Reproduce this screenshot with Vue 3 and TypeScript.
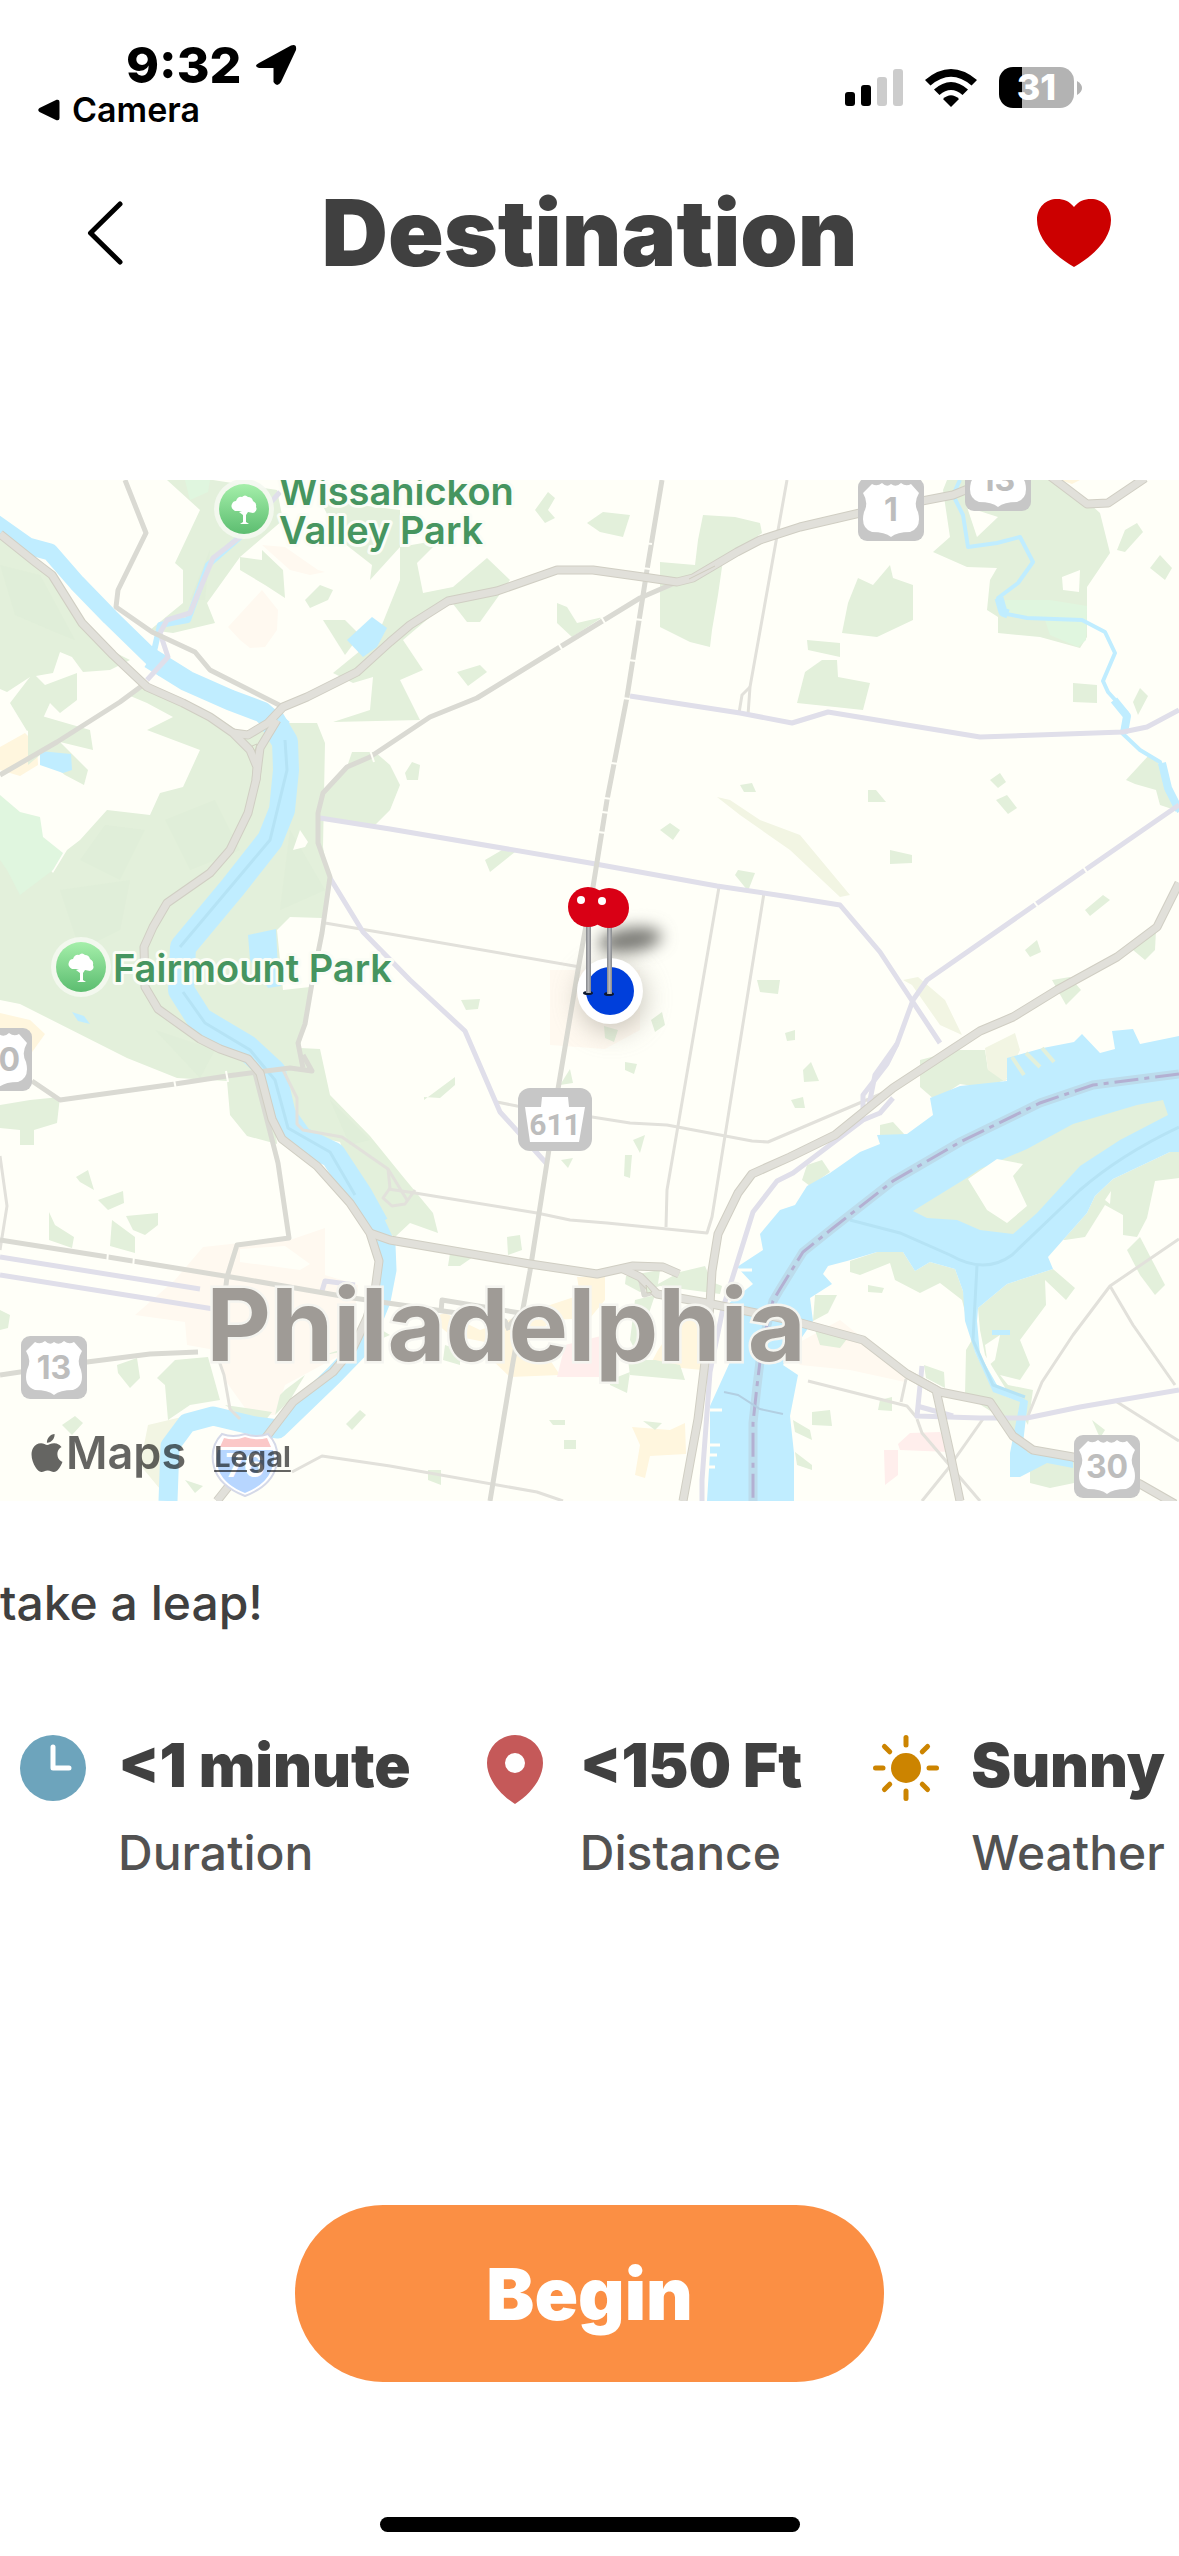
<script setup lang="ts">
import { ref } from 'vue'

interface Stat { icon: 'clock' | 'pin' | 'sun'; value: string; label: string }
interface Shield { x: number; y: number; label: string }

const favourite = ref(true)

const stats: Stat[] = [
  { icon: 'clock', value: '<1 minute', label: 'Duration' },
  { icon: 'pin', value: '<150 Ft', label: 'Distance' },
  { icon: 'sun', value: 'Sunny', label: 'Weather' },
]

const parks: string[] = [
  '0,58 50,92 85,143 110,170 130,180 110,190 83,192 72,177 60,172 53,193 30,197 7,212 0,209',
  '143,203 217,237 247,257 277,243 317,243 325,263 323,367 330,407 322,438 290,437 277,450 283,510 310,507 300,568 320,569 330,615 370,656 400,693 433,733 438,753 410,743 395,757 388,753 373,730 353,696 340,662 303,654 270,600 277,664 247,656 230,635 227,601 177,598 127,578 20,524 0,520 0,453 0,330 53,393 67,370 80,360 107,330 150,335 160,313 183,307 200,270 147,250 173,237 147,223 128,215',
  '10,223 33,193 45,205 77,193 77,220 60,233 50,223 40,245 27,251',
  '28,232 90,250 93,270 60,262 88,290 84,305 65,295 40,275 28,285',
  '167,0 213,0 277,10 283,40 240,77 207,123 215,143 173,153 150,150 183,123 183,90 175,83 200,30',
  '240,77 262,80 262,70 283,90 285,118 265,105 240,90',
  '320,20 400,30 400,83 400,100 377,157 333,193 353,203 373,197 370,230 333,242 420,240 400,200 423,190 403,160 450,120 467,142 480,142 510,100 487,78 453,107 423,113 417,83 440,60 400,67 370,100 372,85 340,60',
  '323,140 345,140 360,155 345,175',
  '323,313 347,287 352,272 375,272 390,285 400,305 390,330 375,345 320,338',
  '305,120 320,105 333,110 328,120 310,128',
  '587,43 603,32 630,35 623,57 600,52',
  '703,35 735,37 760,43 762,53 723,80 718,115 712,150 710,167 690,162 660,147 660,82 695,85 698,60',
  '557,123 567,127 577,143 603,137 572,157 557,143',
  '535,30 548,12 555,18 548,30 555,38 545,43',
  '457,192 480,185 487,192 468,206',
  '858,98 873,105 890,85 893,98 913,105 913,140 877,157 842,153 848,123',
  '805,192 822,180 837,180 838,197 870,203 863,230 835,227 797,223',
  '807,160 840,163 840,177 808,170',
  '943,10 947,0 1060,0 1090,24 1100,33 1110,73 1087,107 1087,157 1080,168 1040,157 998,153 998,137 987,130 990,100 997,88 967,87 933,72 950,57',
  '1117,70 1125,50 1137,43 1143,52 1125,72',
  '1150,88 1160,75 1172,88 1165,100',
  '1073,203 1097,205 1097,223 1073,222',
  '1126,300 1150,274 1160,285 1175,330 1160,325 1156,310 1135,304',
  '1133,222 1140,208 1148,216 1138,235',
  '1085,430 1103,415 1110,420 1090,436',
  '1133,470 1156,450 1155,470 1145,480',
  '485,380 502,370 515,372 490,392',
  '405,293 412,282 420,285 418,300 407,300',
  '660,350 670,343 680,350 673,360',
  '740,305 752,303 756,312 744,312',
  '890,370 912,375 912,383 890,384',
  '868,310 876,310 886,322 868,322',
  '990,300 1000,293 1006,302 998,308',
  '996,320 1007,315 1017,328 1008,334',
  '1025,470 1037,460 1041,472 1030,477',
  '0,625 30,620 60,617 57,643 34,650 34,665 20,665 20,650 0,648',
  '49,732 55,745 74,757 72,768 49,760',
  '76,697 88,690 94,710 80,702', '98,720 123,711 124,723 108,730', '112,740 135,757 135,773 110,766',
  '126,736 158,733 158,745 145,755 133,750', '0,830 10,835 8,848 0,850',
  '117,885 137,878 140,898 130,908 118,893', '157,898 175,880 208,877 220,920 190,925 168,940 165,905',
  '340,870 365,840 390,855 360,868 320,876', '285,910 305,895 290,920 275,935 280,915',
  '225,925 272,932 265,941 240,935', '346,944 360,930 366,935 352,950',
  '507,757 520,755 522,770 508,775', '450,773 473,777 460,786 448,786', '424,620 455,597 455,605 440,618 424,617',
  '461,520 480,519 478,529 466,530', '604,546 618,550 614,562 605,558', '625,582 637,584 634,594 625,590',
  '651,540 662,532 665,545 655,552', '633,660 645,655 640,673', '625,675 632,675 630,698 624,696',
  '757,500 780,500 778,514 760,512', '570,589 573,603 560,605', '561,680 573,678 568,688',
  '626,796 660,790 658,804 680,792 705,786 712,802 722,806 720,814 660,806 640,812 625,804',
  '635,820 655,815 650,830 640,880 630,860', '628,880 655,880 680,885 685,900 630,895', '610,900 630,892 627,913 610,905',
  '445,865 460,870 460,885 443,880', '549,940 565,940 565,945 553,945', '564,960 576,960 576,969 564,969',
  '643,941 662,943 655,950', '428,990 441,990 441,1005 428,1000',
  '920,580 958,570 985,570 988,590 1000,590 1007,600 980,607 960,604 935,620 920,607',
  '807,685 822,680 830,692 810,706 802,700', '880,645 893,642 905,655 893,665 880,658',
  '803,590 811,582 819,601 804,602', '791,620 803,617 805,628 795,628', '785,553 795,550 795,560 787,561',
  '1063,760 1087,733 1095,716 1113,699 1170,672 1179,672 1179,698 1155,701 1147,738 1137,757 1123,755 1123,735 1105,725 1085,757 1065,760',
  '1127,770 1140,757 1165,805 1155,815 1140,795', '850,781 877,772 903,772 915,791 930,782 955,789 963,811 975,872 995,912 1020,922 1015,955 1000,937 965,915 966,870 972,860 962,820 940,803 920,813 895,800 890,783 860,795 850,792',
  '815,815 837,815 828,833 813,841', '868,805 884,808 882,813 868,812',
  '978,828 1007,804 1053,789 1075,808 1066,820 1045,800 1046,825 1020,860 1030,885 1020,900 1000,895 1008,905 1033,910 1028,945 985,875 980,850',
  '815,850 850,855 840,868 820,865', '924,885 944,892 945,908 926,898', '880,920 892,917 892,931 878,930',
  '812,932 830,930 832,946 812,945', '793,940 810,950 812,960 795,952', '795,972 812,985 812,990 797,985',
  '1010,973 1030,970 1075,980 1074,1003 1050,1008 1030,1003 1030,990', '1092,940 1105,950 1100,958',
  '1052,500 1070,497 1081,510 1066,525', '735,395 738,390 755,393 748,411', '185,1000 203,1006 195,1013',
  '62,945 75,936 83,943 72,955',
]

const highways: string[] = [
  '0,54 35,82 52,95 82,143 113,175 147,207 183,223 210,237 233,253 250,270 257,287 256,300 248,333 230,370 210,393 167,423 153,447 144,467 145,507 158,529 200,559 220,569 248,579 260,593 272,639 282,659 317,686 350,723 370,753 379,781 375,811 367,838 353,868 333,892 293,922 267,956 247,983 217,1021',
  '233,253 248,255 268,243 283,227 307,217 357,192 390,162 410,145 448,121 497,111 557,90 593,90 643,97 677,102 693,98 737,72 760,60 800,47 860,33 953,15 1000,-4',
  '256,300 260,268 277,240',
  '1050,-4 1087,24 1108,23 1145,-2',
  '1179,403 1157,447 1117,477 1057,510 1013,537 980,551 893,608 835,655 790,677 752,694 738,713 718,754 712,791 710,824 705,882 698,939 683,1021',
  '370,753 390,760 530,784 597,794 633,786 663,787 679,794',
  '623,789 640,797 657,814 707,823 790,840 863,860 907,894 940,912 990,922 1013,956 1033,970 1073,977 1140,1004 1175,1024',
  '907,894 936,910 950,973 960,1021',
]

const roads: string[] = [
  '662,0 647,90 627,217 607,320 593,407 578,490 557,615 548,676 530,791 513,882 490,1021',
  '125,0 146,53 118,110 116,127 152,152 195,172 210,190 283,227',
  '0,295 57,262 120,222 143,205',
  '677,102 640,118 560,167 477,218 430,237 370,277 347,287 323,313 318,333 318,363 330,397 322,453 312,503 305,544 298,563 303,588',
  '32,601 60,620 175,604 227,596 290,588 312,591 303,575',
  '255,593 278,683 289,758 237,765 227,797 218,870',
  '198,872 150,874 87,882 0,895',
  '0,760 108,777 243,799 353,818 457,833 505,841 509,850',
  '441,832 442,820 520,833 507,848',
  '640,797 644,815 657,811',
]

const avenues: string[] = [
  '0,777 200,809', '0,795 220,830', '322,811 325,801 355,805',
  '320,338 390,349 590,383 717,406 790,417 840,425 880,472 903,507 940,563',
  '630,216 740,233 792,243 828,232 980,257 1123,252 1147,247 1179,230',
  '1179,325 1085,390 927,500 913,520 897,564 887,584 863,615 863,630',
  '897,564 875,595 869,625',
  '893,618 880,633 863,640 793,693 777,701 753,732 743,764 723,828 710,892 702,1000 702,1021',
  '330,398 363,452 410,500 465,551 500,632 547,684',
  '280,12 240,57 213,78 190,133 167,140 160,153 168,177 147,200',
  '922,886 917,936 980,938 1027,938 1080,927 1179,910', '917,926 953,936',
]

const lanes: string[] = [
  '787,0 750,207 748,235', '750,207 742,215 739,233', '719,407 703,500 667,710 666,747',
  '764,413 750,500 712,737 707,753 607,743 570,740 537,733 415,713 388,709',
  '497,622 517,626 592,637 630,643 667,645 752,661 768,662 883,613', '325,443 390,454 580,487',
  '292,992 322,976 390,986 537,1012 563,1021', '0,676 7,726 0,770',
  '283,590 297,618 297,644 303,650 342,657 388,689 407,720', '388,689 390,708 383,718 392,726 405,724 415,710',
  '808,901 907,926 917,938', '906,899 901,922', '983,939 947,990 922,1021', '917,939 922,953 980,1021',
  '1028,936 1042,902 1073,855 1110,806 1179,759', '1110,806 1133,845 1175,905', '1117,922 1179,961',
  '217,875 224,895 230,929 240,939',
]

const breaks: string[] = [
  '644,63 652,64', '642,88 650,89', '634,139 642,140', '628,180 636,181', '622,218 630,219', '611,283 619,284',
  '604,318 612,319', '602,332 610,333', '598,352 606,353', '370,270 374,282', '557,161 563,171', '600,135 606,145',
  '108,772 107,784', '134,776 133,788', '174,599 176,610', '226,591 228,602', '1082,385 1088,394', '1032,419 1038,427',
]

const shields: Shield[] = [
  { x: 858, y: -2, label: '1' },
  { x: 965, y: -32, label: '13' },
  { x: -34, y: 548, label: '30' },
  { x: 21, y: 856, label: '13' },
  { x: 1074, y: 955, label: '30' },
]

const trees = [{ x: 244, y: 29 }, { x: 81, y: 487 }]
const pins = [{ x: 588, y: 427 }, { x: 609, y: 428 }]
const rays = [0, 45, 90, 135, 180, 225, 270, 315]
</script>

<template>
  <div class="screen">
    <header class="status">
      <div class="status-left">
        <div class="time">
          <span>9:32</span>
          <svg width="42" height="42" viewBox="0 0 42 42" aria-hidden="true">
            <path d="M4 19 36 1.500Q42-.5 41 6L26 38Q22 44 18.500 38V24H4Q-2 22 4 19Z" />
          </svg>
        </div>
        <a class="return" href="#camera">
          <svg width="22" height="22" viewBox="0 0 22 22" aria-hidden="true"><path d="M1.500 9 18.500.8Q21.500 0 21.500 3V19Q21.500 22 18.500 21.200L1.500 13Q-1 11 1.500 9Z" /></svg>
          Camera
        </a>
      </div>
      <div class="status-right">
        <svg width="58" height="38" viewBox="0 0 58 38" aria-label="Signal">
          <rect x="0" y="23" width="10" height="14" rx="3" />
          <rect x="16" y="16" width="10" height="21" rx="3" />
          <rect x="32" y="8" width="10" height="29" rx="3" fill="#ccc" />
          <rect x="48" y="0" width="10" height="37" rx="3" fill="#ccc" />
        </svg>
        <svg width="52" height="38" viewBox="0 0 52 38" aria-label="Wi-Fi">
          <path d="M0 11Q26-11 52 11L46.500 16.500Q26-1 5.500 16.500Z" />
          <path d="M9 20.500Q26 5.500 43 20.500L37.500 26Q26 16 14.500 26Z" />
          <path d="M18 30Q26 22.500 34 30L26 38Z" />
        </svg>
        <div class="battery">
          <span class="battery-level">31</span>
          <svg width="5" height="14" viewBox="0 0 5 14" aria-hidden="true"><path d="M0 0Q5 3 5 7T0 14Z" fill="#b3b3b3" /></svg>
        </div>
      </div>
    </header>

    <nav class="bar">
      <button class="icon-button" type="button" aria-label="Back">
        <svg width="36" height="64" viewBox="0 0 36 64"><path d="M33 3 3.500 32 33 61" fill="none" stroke="#000" stroke-width="5" stroke-linecap="round" stroke-linejoin="round" /></svg>
      </button>
      <h1>Destination</h1>
      <button class="icon-button" type="button" aria-label="Favourite" :aria-pressed="favourite" @click="favourite = !favourite">
        <svg width="74" height="68" viewBox="0 0 74 68"><path d="M37 8C32 2 27 0 20 0 9 0 0 8 0 21 0 39 16 56 37 68 58 56 74 39 74 21 74 8 65 0 54 0 47 0 42 2 37 8Z" :fill="favourite ? '#cc0000' : '#cccccc'" /></svg>
      </button>
    </nav>

    <section class="map" aria-label="Map">
      <svg class="map-canvas" viewBox="0 0 1179 1021">
        <defs>
          <linearGradient id="leaf" x1="0" y1="0" x2="0" y2="1"><stop offset="0" stop-color="#a5efaa" /><stop offset="1" stop-color="#5cbd70" /></linearGradient>
          <linearGradient id="steel"><stop offset="0" stop-color="#85878b" /><stop offset=".5" stop-color="#b9babd" /><stop offset="1" stop-color="#85878b" /></linearGradient>
          <filter id="soft" x="-50%" y="-100%" width="200%" height="300%"><feGaussianBlur stdDeviation="8" /></filter>
          <filter id="wide" x="-50%" y="-50%" width="200%" height="200%"><feGaussianBlur stdDeviation="13" /></filter>
        </defs>
        <rect width="1179" height="1021" fill="#fffff8" />

        <g fill="#fff9f0">
          <path d="M262 65 285 67 318 90 325 92 310 95 290 90ZM228 147 262 110 278 130 277 150 265 167 250 168 240 160Z" />
          <path d="M203 767 240 763 290 760 325 748 325 795 358 805 350 870 285 905 275 935 250 935 225 900 215 870 187 865 185 842 135 835 175 800Z" />
          <path d="M550 490H640V550L605 569 550 565ZM780 860 800 862 840 840 865 860 905 890 905 902 850 890 800 885Z" />
        </g>
        <path d="M240 769 285 766 310 784 300 790 240 782Z" fill="#fffff8" />
        <g fill="#fff6de">
          <path d="M0 267 25 253 37 265 38 285 20 296 0 290ZM0 533 30 540 45 554 30 575 0 560Z" />
          <path d="M577 797H605V820L590 838 552 840 520 870 550 880 560 895 510 897 490 878 500 865 450 855 430 838 445 833 480 850 550 825 580 815ZM658 870 675 845 700 830 702 890 650 885ZM632 947 670 950 685 943 686 974 650 976 645 998 635 995 640 965ZM1060 0H1080L1072 4Z" />
        </g>
        <g fill="#ffeeec"><path d="M565 865 605 855 603 897H557ZM898 964 910 953 940 952 950 972 900 970ZM884 970H898V995L885 1005Z" /></g>

        <g fill="#e3f0db"><polygon v-for="p in parks" :key="p" :points="p" /></g>
        <g fill="#e0f6df">
          <polygon points="0,315 20,332 40,337 43,357 63,373 53,390 20,415 7,390 0,380" />
          <polygon points="1005,120 1050,120 1087,126 1086,160 1078,167 1050,155 1045,140 1003,132" />
          <polygon points="185,0 210,0 208,12 190,20" />
        </g>
        <g fill="#deecd7" opacity=".6">
          <path d="M0 85 40 95 75 160 50 150 15 135ZM105 345 145 350 120 400 80 380ZM165 340 215 320 240 370 190 390ZM290 350 325 410 280 430ZM60 410 130 400 120 450 80 470ZM190 120 210 70 205 120ZM155 550 215 570 200 598ZM330 620 370 660 350 665Z" />
        </g>
        <g fill="#f2f5e3">
          <path d="M717 317 730 320 760 340 800 355 850 415 840 417 790 370 740 335ZM903 500 918 497 945 520 962 555 940 545 912 505Z" />
          <path d="M985 568 1015 553 1020 570 1005 602 988 590ZM148 945 190 935 168 960 165 1015 140 985Z" />
        </g>
        <g fill="#fffff8">
          <polygon points="967,27 998,37 977,57" /><polygon points="1062,97 1080,90 1079,112 1063,110" />
          <polygon points="293,370 300,350 308,362 305,367" /><polygon points="985,865 1000,855 995,880 988,886" />
        </g>

        <g fill="none" stroke="#c0edff" stroke-linejoin="round">
          <polyline stroke-width="17" points="-6,42 28,66 50,72 77,103 110,137 150,176 165,190" />
          <polyline stroke-width="21" points="150,178 187,201 230,220 262,232 283,250" />
          <polyline stroke-width="26" points="270,237 285,262 286,290 282,330 270,360 233,407 183,467 181,510 200,540 247,568 273,592 283,635 300,659 333,675 360,716 376,745" />
          <polyline stroke-width="19" points="372,735 386,765 387,790 381,821 363,865 333,896 278,949 255,946 213,936 187,943 170,966 168,1021" />
          <polyline stroke-width="6" points="240,57 208,85 188,140 160,145 152,180" />
          <polyline stroke-width="4" points="960,0 953,15 963,35 968,67 997,63 1020,57 1033,82 1018,103 998,118 1002,133 1027,138 1082,140 1105,152 1115,173 1103,201 1108,212 1127,233 1122,253 1140,270 1160,282 1167,310 1179,332" />
          <polyline stroke-width="9" points="999,118 1003,132 1008,134" />
          <polyline stroke-width="8" points="1114,220 1127,236 1124,253" />
          <polyline stroke-width="8" points="1162,283 1168,308 1179,330" />
        </g>
        <g fill="#c0edff">
          <polygon points="347,160 372,137 387,148 377,167 363,177" /><polygon points="40,271 71,274 72,290 63,293 40,285" />
          <polygon points="248,455 276,449 278,490 281,506 268,508 250,480" /><polygon points="72,532 84,536 90,544 78,541" />
          <polygon points="1179,556 1140,564 1133,549 1112,551 1115,569 1100,573 1082,554 1074,562 1043,568 1007,578 1007,601 960,606 930,618 933,635 907,654 877,655 880,664 860,672 830,693 807,706 795,725 780,730 760,754 763,770 737,787 753,804 728,824 733,855 730,882 710,926 710,973 707,1021 794,1021 794,973 790,936 798,895 783,885 813,841 810,818 832,804 823,794 828,786 847,781 877,772 903,772 915,791 930,782 955,789 963,811 965,841 975,872 993,912 1020,922 1010,973 1010,997 1020,997 1047,983 1073,988 1073,980 1028,973 1023,963 1028,921 997,905 980,875 977,841 978,828 1007,804 1053,789 1048,777 1063,760 1087,733 1095,716 1113,699 1170,672 1179,672" />
          <polygon points="992,850 1010,850 1010,855 992,855" />
        </g>
        <polygon fill="#e3f0db" points="913,731 965,699 980,689 1027,669 1073,644 1137,625 1163,620 1168,635 1120,660 1080,686 1037,733 1013,754 980,750 957,740 927,738" />
        <polygon fill="#fffff8" points="968,699 997,679 1023,684 1013,696 1027,726 1007,743 987,730" />
        <path d="M1105 720 1111 711 1110 724 1095 712Z" fill="#fffff8" />
        <g stroke="#fffff8" stroke-width="3"><path d="M735 790H752M730 802H748M725 832H745M727 845H738M725 858H735M710 930H722M708 965H720M706 975H717M706 987H715" /></g>
        <g stroke="#e3f0db" stroke-width="4" fill="none"><path d="M1012 577 1024 595M1026 573 1040 587M1042 568 1054 582" /></g>
        <g fill="none" stroke="#b5e3f5" stroke-width="3">
          <path d="M850 740 900 753 950 775Q985 795 1012 775L1080 710Q1120 675 1179 647M977 785 973 860 993 905 1025 917M285 260 287 290 270 360 180 467M183 512 205 543 250 570 275 600 288 648 330 672 355 715" />
        </g>
        <g fill="none">
          <polyline stroke="#bcdcec" stroke-width="9" points="1179,594 1093,605 1040,623 960,662 893,701 833,748 803,772 780,809 773,821 762,865 757,906 753,943 753,1021" />
          <polyline stroke="#b3b0d2" stroke-width="3" stroke-dasharray="24 6 5 6" points="1179,594 1093,605 1040,623 960,662 893,701 833,748 803,772 780,809 773,821 762,865 757,906 753,943 753,1021" />
          <path d="M724 912 738 915 760 929 783 934" stroke="#b2cfe2" stroke-width="2" />
        </g>

        <g fill="none" stroke-linejoin="round">
          <polyline v-for="p in lanes" :key="p" :points="p" stroke="#e2e1db" stroke-width="3" />
          <polyline v-for="p in avenues" :key="p" :points="p" stroke="#e0dfea" stroke-width="5" />
          <polyline v-for="p in roads" :key="p" :points="p" stroke="#dadad3" stroke-width="5" />
          <polyline v-for="p in highways" :key="p" :points="p" stroke="#d0cec3" stroke-width="9" />
          <polyline v-for="p in highways" :key="p + 'f'" :points="p" stroke="#e1e0da" stroke-width="7" />
          <path v-for="p in breaks" :key="p" :d="'M' + p.replace(' ', 'L')" stroke="#fffff8" stroke-width="2" />
          <path d="M252 266 257 264 255 271ZM646 805 652 812 647 813ZM689 99 715 86" fill="#e3f0db" stroke="#cfcdbf" stroke-width="1" />
        </g>

        <g v-for="(s, i) in shields" :key="i" :transform="`translate(${s.x} ${s.y})`">
          <rect width="66" height="63" rx="9" fill="#c7c7c7" />
          <path d="M14 6Q19 9 24 5 29 10 33 6 38 10 43 5 48 9 53 6L61 15Q55 25 60 34 64 50 52 54 39 54 33 59 27 54 14 54 2 50 6 34 11 25 5 15Z" fill="#fff" />
          <text x="33" y="43" class="shield-text">{{ s.label }}</text>
        </g>
        <g transform="translate(518 608)">
          <rect width="74" height="63" rx="12" fill="#c7c7c7" />
          <path d="M24 9H50L51 19H67L61 54H12L7 19H23Z" fill="#fff" />
          <text x="37" y="47" class="shield-text narrow">611</text>
        </g>
        <g transform="translate(213 953)">
          <path d="M9 1Q20 5 32 1 44 5 55 1 68 14 63 34 58 53 32 63 6 53 1 34-4 14 9 1Z" fill="#fff" stroke="#d5d9e8" stroke-width="2" />
          <path d="M11 5Q22 8 32 4 43 8 54 5L58 14H7Z" fill="#fbc8c8" />
          <path d="M5 17H60Q63 27 58 38 52 52 32 60 12 52 6 38 2 27 5 17Z" fill="#b7d6ff" />
          <text x="32" y="44" class="shield-text interstate">76</text>
        </g>

        <g v-for="t in trees" :key="t.x" :transform="`translate(${t.x} ${t.y})`">
          <circle r="30" fill="#f4f8f0" opacity=".9" /><circle r="25" fill="url(#leaf)" />
          <path d="M-2 2H-9Q-14-1-12-5-11-8-8-8-6-13-2-12 1-15 4-12 8-12 9-8 13-6 12-2 14 2 9 4L4 3 2 6V13L5 15H-4L-1 13V6L-5 3Z" fill="#fff" />
        </g>
        <text class="park" x="279" y="25">Wissahickon</text>
        <text class="park" x="279" y="64">Valley Park</text>
        <text class="park" x="113" y="502">Fairmount Park</text>
        <text class="city" x="506" y="881">Philadelphia</text>

        <ellipse cx="630" cy="460" rx="32" ry="12" fill="#777772" transform="rotate(-8 630 460)" filter="url(#soft)" />
        <circle cx="612" cy="518" r="34" fill="#a9a59a" opacity=".6" filter="url(#wide)" />
        <circle cx="610" cy="511" r="33" fill="#fff" /><circle cx="610" cy="511" r="24" fill="#003fdb" />
        <g v-for="p in pins" :key="p.x">
          <ellipse :cx="p.x" :cy="p.y + 86" rx="5" ry="2" fill="#0c1830" />
          <rect :x="p.x - 2" :y="p.y + 18" width="5" height="68" fill="url(#steel)" />
        </g>
        <g v-for="p in pins" :key="'h' + p.x"><circle :cx="p.x" :cy="p.y" r="20" fill="#d90015" /></g>
        <circle v-for="p in pins" :key="'d' + p.x" :cx="p.x - 7" :cy="p.y - 7" r="4" fill="#fff" />
      </svg>
      <div class="attribution">
        <span class="brand">
          <svg width="38" height="38" viewBox="0 0 24 24" fill="currentColor" aria-hidden="true"><path d="M12.152 6.896c-.948 0-2.415-1.078-3.960-1.040-2.040.027-3.910 1.183-4.961 3.014-2.117 3.675-.546 9.103 1.519 12.090 1.013 1.454 2.208 3.090 3.792 3.039 1.520-.065 2.090-.987 3.935-.987 1.831 0 2.350.987 3.960.948 1.637-.026 2.676-1.480 3.676-2.948 1.156-1.688 1.636-3.325 1.662-3.415-.039-.013-3.182-1.221-3.220-4.857-.026-3.040 2.480-4.494 2.597-4.559-1.429-2.090-3.623-2.324-4.390-2.376-2-.156-3.675 1.090-4.610 1.090zM15.530 3.830c.843-1.012 1.400-2.427 1.245-3.830-1.207.052-2.662.805-3.532 1.818-.780.896-1.454 2.338-1.273 3.714 1.338.104 2.715-.688 3.559-1.701" /></svg>
          <span class="brand-name">Maps</span>
        </span>
        <a href="#legal">Legal</a>
      </div>
    </section>

    <main class="details">
      <p class="hint">take a leap!</p>
      <dl class="stats">
        <div v-for="s in stats" :key="s.label" class="stat">
          <svg v-if="s.icon === 'clock'" width="66" height="78" viewBox="0 0 66 78" aria-hidden="true">
            <circle cx="33" cy="39" r="33" fill="#6da4bc" />
            <path d="M33 18V39H49" fill="none" stroke="#fff" stroke-width="5" stroke-linecap="round" stroke-linejoin="round" />
          </svg>
          <svg v-else-if="s.icon === 'pin'" width="66" height="78" viewBox="0 0 66 78" aria-hidden="true">
            <path fill-rule="evenodd" d="M33 75C17 65 5 49 5 34A28 28 0 0 1 61 34C61 49 49 65 33 75ZM33 24A10 10 0 1 0 33 44 10 10 0 1 0 33 24Z" fill="#c55959" />
          </svg>
          <svg v-else width="66" height="78" viewBox="0 0 66 78" aria-hidden="true">
            <circle cx="33" cy="39" r="15" fill="#cc8400" />
            <path v-for="r in rays" :key="r" d="M33 8.500V16" :transform="`rotate(${r} 33 39)`" stroke="#cc8400" stroke-width="5" stroke-linecap="round" />
          </svg>
          <div class="stat-text">
            <dd>{{ s.value }}</dd>
            <dt>{{ s.label }}</dt>
          </div>
        </div>
      </dl>
      <button class="begin" type="button">Begin</button>
    </main>
    <div class="home-indicator"></div>
  </div>
</template>

<style>
body { margin: 0; background: #fff; }
</style>

<style scoped>
.screen {
  box-sizing: border-box;
  min-height: 100vh;
  display: flex;
  flex-direction: column;
  padding-bottom: 24px;
  overflow-x: hidden;
  font-family: Inter, "Liberation Sans", sans-serif;
  color: #404040;
}
svg { display: block; flex: none; }
button { border: 0; padding: 0; background: none; font: inherit; cursor: pointer; }
.status {
  display: flex;
  justify-content: space-between;
  align-items: flex-start;
  padding: 40px 97px 43px 38px;
  color: #000;
}
.time {
  display: flex;
  align-items: center;
  gap: 14px;
  padding-left: 88px;
  font-size: 50px;
  font-weight: 800;
  line-height: 50px;
}
.return {
  display: flex;
  align-items: center;
  gap: 12px;
  color: #000;
  font-size: 34px;
  font-weight: 600;
  line-height: 40px;
  text-decoration: none;
}
.status-right { display: flex; align-items: center; gap: 22px; padding-top: 27px; }
.battery { display: flex; align-items: center; gap: 3px; }
.battery-level {
  width: 75px;
  border-radius: 14px;
  background: linear-gradient(90deg, #000 31%, #b3b3b3 31%);
  color: #fff;
  font-size: 36px;
  font-weight: 800;
  line-height: 41px;
  text-align: center;
}
.bar {
  display: grid;
  grid-template-columns: 1fr auto 1fr;
  align-items: center;
  padding: 0 68px;
}
.icon-button { justify-self: end; }
.icon-button:first-child { justify-self: start; padding-left: 19px; }
h1 { margin: 0; font-size: 92px; font-weight: 900; line-height: 120px; }
.map { position: relative; margin-top: 187px; }
.map-canvas { width: 100%; height: auto; }
.shield-text { font-size: 32px; font-weight: 700; fill: #bdbdbd; text-anchor: middle; }
.narrow { font-family: Roboto, sans-serif; font-size: 30px; }
.interstate { fill: #fff; }
.park {
  font-size: 38px;
  font-weight: 600;
  fill: #469560;
  stroke: #fbfdf6;
  stroke-width: 6px;
  stroke-linejoin: round;
  paint-order: stroke;
}
.city {
  font-size: 100px;
  font-weight: 700;
  fill: #9f9b96;
  stroke: #f5f5f0;
  stroke-width: 5px;
  paint-order: stroke;
  text-anchor: middle;
}
.attribution {
  position: absolute;
  left: 28px;
  bottom: 18px;
  display: flex;
  align-items: center;
  gap: 28px;
  color: #000;
  opacity: .6;
}
.brand { display: flex; align-items: center; line-height: 60px; }
.brand-name { font-size: 45px; font-weight: 600; }
.attribution a { padding-top: 6px; color: inherit; font-size: 29px; font-weight: 700; text-underline-offset: 3px; }
.details { display: flex; flex-direction: column; padding-top: 72px; }
.hint { margin: 0; font-size: 48px; font-weight: 500; line-height: 60px; }
.stats {
  display: flex;
  justify-content: space-between;
  margin: 96px 0 0;
  padding: 0 14px 0 20px;
}
.stat { display: flex; align-items: flex-start; gap: 32px; }
.stat-text { display: flex; flex-direction: column; gap: 24px; }
dd { margin: 0; font-size: 60px; font-weight: 900; line-height: 72px; white-space: nowrap; }
dt { font-size: 48px; font-weight: 500; line-height: 56px; color: #525252; }
.begin {
  align-self: center;
  width: 50%;
  margin-top: 324px;
  border-radius: 88px;
  background: #fb8f44;
  color: #fff;
  font-size: 72px;
  font-weight: 900;
  line-height: 177px;
}
.home-indicator {
  align-self: center;
  width: 420px;
  height: 15px;
  margin-top: auto;
  border-radius: 8px;
  background: #000;
}
</style>
